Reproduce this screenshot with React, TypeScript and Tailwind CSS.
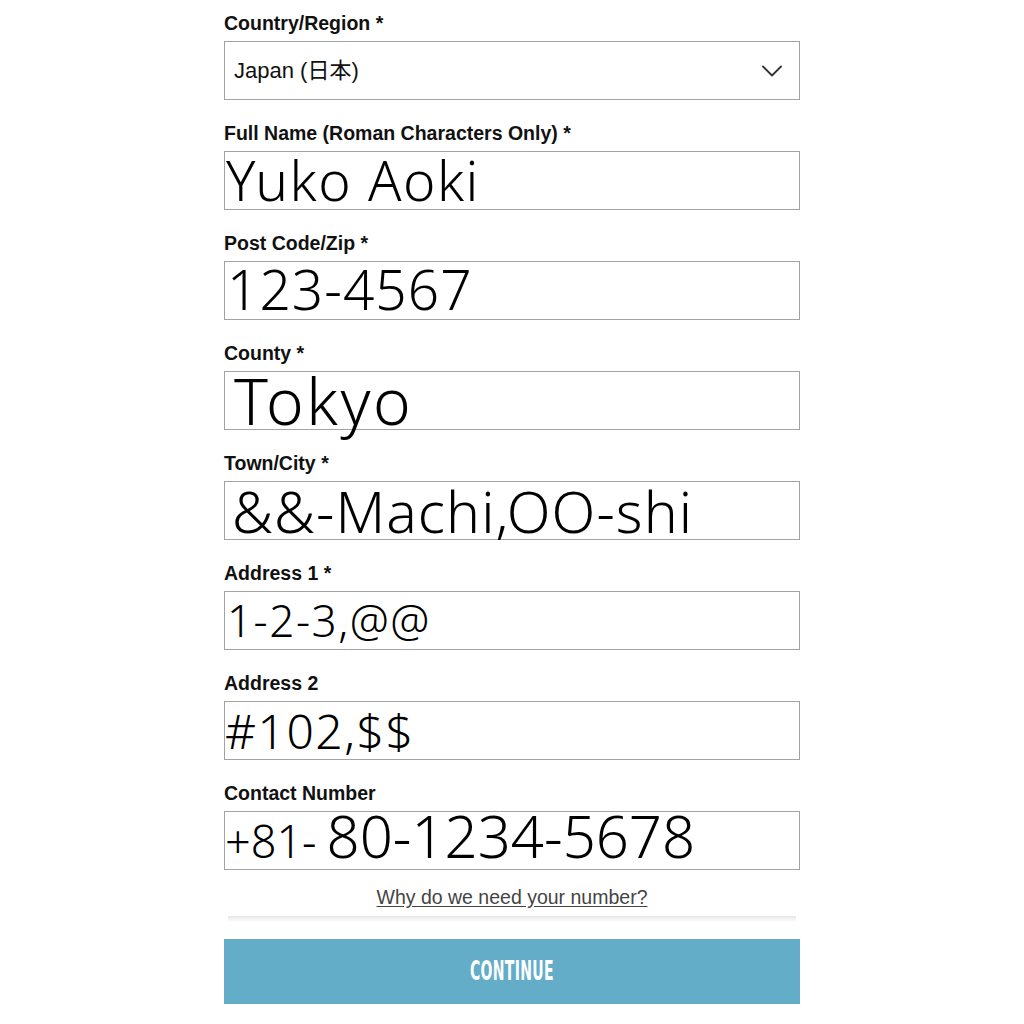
import { ChevronDown } from "lucide-react";

const label = "font-['Liberation_Sans',Arial,sans-serif] font-bold text-[19.5px] leading-[22px] text-[#111]";
const hand = "font-['Noto_Sans','DejaVu_Sans',sans-serif] font-light text-black leading-[44px] whitespace-nowrap";

const Field = ({ title, children }: { title: string; children: React.ReactNode }) => (
  <div className="flex flex-col">
    <div className={`h-[41px] pt-[12px] ${label}`}>{title}</div>
    <div className="relative h-[59px] border-[1.5px] border-[#a3a3a3] bg-white flex items-end">
      {children}
    </div>
  </div>
);

export default function App() {
  return (
    <div className="min-h-screen w-full bg-white">
      <div className="mx-auto w-[576px] flex flex-col gap-[10px]">
        <Field title="Country/Region *">
          <div className="flex h-full w-full items-center justify-between pl-[9px] pr-[9px]">
            <span className="font-['Liberation_Sans','Noto_Sans_CJK_JP',sans-serif] text-[22px] text-[#111]">
              Japan (日本)
            </span>
            <ChevronDown className="h-[36px] w-[36px] text-[#333]" strokeWidth={1.2} />
          </div>
        </Field>
        <Field title="Full Name (Roman Characters Only) *">
          <span className={`${hand} text-[55px] tracking-[1.5px] pl-[1px] pb-[7.5px]`}>Yuko Aoki</span>
        </Field>
        <Field title="Post Code/Zip *">
          <span className={`${hand} text-[55px] tracking-[1px] pl-[2px] pb-[8.5px]`}>123-4567</span>
        </Field>
        <Field title="County *">
          <span className={`${hand} text-[64px] tracking-[2.5px] pl-[9px] pb-[6px]`}>Tokyo</span>
        </Field>
        <Field title="Town/City *">
          <span className={`${hand} text-[57px] tracking-[1.1px] pl-[7px] pb-[6.5px]`}>&amp;&amp;-Machi,OO-shi</span>
        </Field>
        <Field title="Address 1 *">
          <span className={`${hand} text-[44px] tracking-[1.5px] pl-[2px] pb-[7px]`}>1-2-3,@@</span>
        </Field>
        <Field title="Address 2">
          <span className={`${hand} text-[48px] tracking-[1.5px] pl-[0px] pb-[6px]`}>#102,$$</span>
        </Field>
        <Field title="Contact Number">
          <span className={`${hand} pb-[6px] flex items-baseline`}>
            <span className="text-[45px]">+81-</span>
            <span className="text-[58px] pl-[10px]">80-1234-5678</span>
          </span>
        </Field>
        <div className="flex justify-center pt-[6px]">
          <a className="font-['Liberation_Sans',Arial,sans-serif] text-[19.5px] leading-[22px] text-[#444] underline underline-offset-2">
            Why do we need your number?
          </a>
        </div>
        <div className="mx-[4px] -mt-[2px] h-[6px] bg-gradient-to-b from-[#e6e6e6] to-white" />
        <button className="mt-[7px] h-[65px] w-full bg-[#63adc9] flex items-center justify-center">
          <span className="font-['DejaVu_Sans_Condensed','Liberation_Sans_Narrow',sans-serif] text-[26px] font-semibold text-white tracking-[0.5px] scale-x-[0.6] inline-block">
            CONTINUE
          </span>
        </button>
      </div>
    </div>
  );
}
